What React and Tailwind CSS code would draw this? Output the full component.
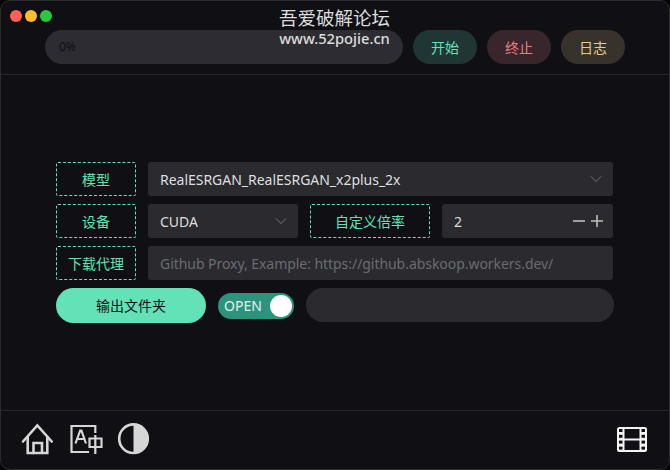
import React from "react";

function Label({ children, className = "" }) {
  return (
    <div className={"h-[34px] flex items-center justify-center border border-dashed border-[#63e2b7] rounded-[2px] text-[#63e2b7] text-[14px] shrink-0 " + className}>
      {children}
    </div>
  );
}

function Chevron() {
  return (
    <svg width="14" height="14" viewBox="0 0 14 14" fill="none" stroke="#57575c" strokeWidth="1.1" className="shrink-0">
      <path d="M2 4.5 L7 9.5 L12 4.5" />
    </svg>
  );
}

function Home() {
  return (
    <svg width="34" height="34" viewBox="0 0 34 34" fill="none" stroke="#d6d6d6" strokeWidth="2.6" strokeLinejoin="miter" strokeLinecap="round" className="shrink-0">
      <path d="M2 18.5 L16.3 2.5 L30.7 18.5" />
      <path d="M6.7 14 V30 H26.3 V14" />
      <path d="M12.5 30 V20 H21 V30" />
    </svg>
  );
}

function Lang() {
  return (
    <svg width="34" height="34" viewBox="0 0 34 34" fill="none" stroke="#d6d6d6" strokeWidth="2.2" className="shrink-0">
      <path d="M26.3 10 V3 H2.5 V29 H20" />
      <path d="M6.5 20.5 L11.2 7.5 H12.4 L17 20.5 M8.2 16 H15.4" />
      <path d="M20.5 15.5 H32.5 V24 H20.5 Z M26.3 12 V31" strokeWidth="2.2" />
    </svg>
  );
}

function Contrast() {
  return (
    <svg width="34" height="34" viewBox="0 0 34 34" className="shrink-0">
      <circle cx="16.5" cy="15.7" r="14.3" fill="none" stroke="#d6d6d6" strokeWidth="2.6" />
      <path d="M16.5 1.4 A14.3 14.3 0 0 1 16.5 30 Z" fill="#d6d6d6" />
    </svg>
  );
}

function Film() {
  return (
    <svg width="32" height="26" viewBox="0 0 32 26" className="shrink-0">
      <rect x="1" y="0" width="30" height="25" rx="2.5" fill="#f4f4f4" />
      <g fill="#101014">
        <rect x="8.5" y="2" width="15" height="9.5" />
        <rect x="8.5" y="13.5" width="15" height="9.5" />
        <rect x="3" y="2" width="3.5" height="3" />
        <rect x="3" y="7.8" width="3.5" height="3" />
        <rect x="3" y="13.6" width="3.5" height="3" />
        <rect x="3" y="19.6" width="3.5" height="3" />
        <rect x="25.5" y="2" width="3.5" height="3" />
        <rect x="25.5" y="7.8" width="3.5" height="3" />
        <rect x="25.5" y="13.6" width="3.5" height="3" />
        <rect x="25.5" y="19.6" width="3.5" height="3" />
      </g>
    </svg>
  );
}

export default function App() {
  return (
    <div className="w-[670px] h-[470px] bg-[#050506] overflow-hidden font-['Noto_Sans','Noto_Sans_CJK_SC',sans-serif]">
      <div className="relative w-full h-full flex flex-col bg-[#101014] rounded-[10px] border border-[#2c2c2e]">
        <div className="absolute left-[9px] top-[9px] flex gap-[3px]">
          <span className="w-3 h-3 rounded-full bg-[#ff5f57]" />
          <span className="w-3 h-3 rounded-full bg-[#febc2e]" />
          <span className="w-3 h-3 rounded-full bg-[#28c840]" />
        </div>

        <div className="absolute left-[277px] top-[5px] w-[113px] flex flex-col items-center text-[#dcdcdc] pointer-events-none">
          <span className="text-[18.5px] leading-[23px] whitespace-nowrap">吾爱破解论坛</span>
          <span className="text-[14.7px] leading-[18px] font-medium whitespace-nowrap">www.52pojie.cn</span>
        </div>

        <header className="h-[74px] shrink-0 flex items-start pt-[29px] pl-[44px] gap-[10px] border-b border-[#26262a]">
          <div className="w-[358px] h-[34px] rounded-full bg-[#2c2c32] flex items-center pl-[14px] text-[12px] text-[#111114]">0%</div>
          <button className="w-[64px] h-[34px] rounded-full bg-[#1f3634] text-[#63e2b7] text-[14px]">开始</button>
          <button className="w-[64px] h-[34px] rounded-full bg-[#38262c] text-[#e88080] text-[14px]">终止</button>
          <button className="w-[64px] h-[34px] rounded-full bg-[#38322c] text-[#f2c97d] text-[14px]">日志</button>
        </header>

        <main className="flex-1 flex flex-col justify-center gap-2 pl-[55px] pr-[56px] text-[14px]">
          <div className="flex gap-3">
            <Label className="w-[80px]">模型</Label>
            <div className="flex-1 h-[34px] rounded-[3px] bg-[#2a2a2f] flex items-center justify-between pl-3 pr-[10px] text-[#dfdfdf]">
              <span className="tracking-[-0.02px]">RealESRGAN_RealESRGAN_x2plus_2x</span>
              <Chevron />
            </div>
          </div>
          <div className="flex gap-3">
            <Label className="w-[80px]">设备</Label>
            <div className="w-[150px] h-[34px] rounded-[3px] bg-[#2a2a2f] flex items-center justify-between pl-3 pr-[10px] text-[#dfdfdf]">
              <span>CUDA</span>
              <Chevron />
            </div>
            <Label className="w-[120px]">自定义倍率</Label>
            <div className="flex-1 h-[34px] rounded-[3px] bg-[#2a2a2f] flex items-center justify-between pl-3 pr-[10px] text-[#dfdfdf]">
              <span>2</span>
              <span className="flex gap-[6px] text-[#bdbdbd]">
                <svg width="12" height="12" viewBox="0 0 12 12" stroke="currentColor" strokeWidth="1.6"><path d="M0 6 H12" /></svg>
                <svg width="12" height="12" viewBox="0 0 12 12" stroke="currentColor" strokeWidth="1.6"><path d="M0 6 H12 M6 0 V12" /></svg>
              </span>
            </div>
          </div>
          <div className="flex gap-3">
            <Label className="w-[80px]">下载代理</Label>
            <div className="flex-1 h-[34px] rounded-[3px] bg-[#2a2a2f] flex items-center pl-3 text-[#6c6c70] tracking-[-0.05px]">
              Github Proxy, Example: https://github.abskoop.workers.dev/
            </div>
          </div>
          <div className="flex items-center gap-3">
            <button className="w-[150px] h-[35px] rounded-full bg-[#63e2b7] text-[#101014] text-[14px] shrink-0">输出文件夹</button>
            <div className="w-[76px] h-[26px] rounded-full bg-[#2a947d] flex items-center justify-between pl-[6px] pr-[2px] text-[#e4f2ee] shrink-0">
              <span className="text-[14px]">OPEN</span>
              <span className="w-[22px] h-[22px] rounded-full bg-white" />
            </div>
            <div className="flex-1 h-[34px] rounded-full bg-[#2a2a2f] mr-[-1px] mb-[1px]" />
          </div>
        </main>

        <footer className="h-[59px] shrink-0 flex items-center justify-between pl-[20px] pr-[21px] border-t border-[#26262a]">
          <div className="flex items-center gap-[14px]">
            <Home />
            <Lang />
            <Contrast />
          </div>
          <Film />
        </footer>
      </div>
    </div>
  );
}
